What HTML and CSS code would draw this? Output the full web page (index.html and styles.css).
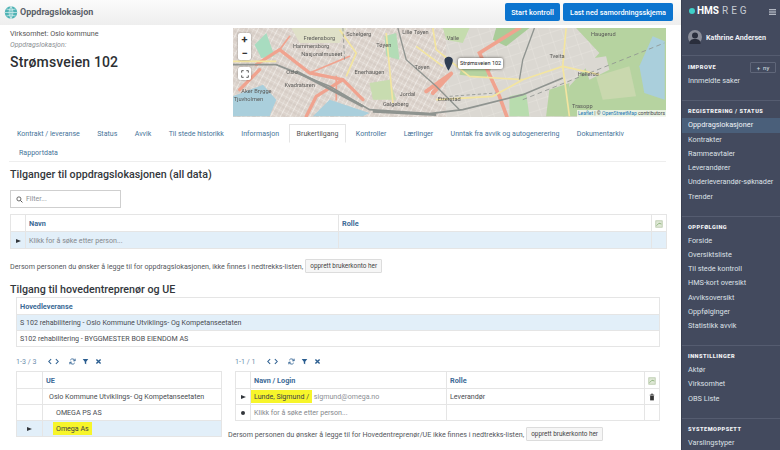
FILE: index.html
```html
<!DOCTYPE html>
<html lang="no">
<head>
<meta charset="utf-8">
<title>Oppdragslokasjon</title>
<link rel="stylesheet" href="styles.css">
</head>
<body>
<div class="app">
  <main class="main">
    <header class="topbar">
      <div class="brand">
        <svg class="globe" viewBox="0 0 18 18"><circle cx="9" cy="9" r="8" fill="#4fb3b5"/><path d="M9 1v16M1 9h16M3 4.500q6 2.500 12 0M3 13.500q6-2.500 12 0M9 1q-5 8 0 16M9 1q5 8 0 16" fill="none" stroke="#e8f5f5" stroke-width=".8"/></svg>
        <span class="brand-text">Oppdragslokasjon</span>
      </div>
      <div class="top-actions">
        <button class="btn-primary btn-start">Start kontroll</button>
        <button class="btn-primary btn-last">Last ned samordningsskjema</button>
      </div>
    </header>

    <section class="info">
      <div class="info-text">
        <div class="company">Virksomhet: Oslo kommune</div>
        <div class="sublabel">Oppdragslokasjon:</div>
        <h1 class="location">Strømsveien 102</h1>
      </div>
      <div class="map">
        <svg class="map-svg" viewBox="10 85 1300 267" preserveAspectRatio="none">
          <defs>
            <pattern id="streets" width="26" height="22" patternUnits="userSpaceOnUse" patternTransform="rotate(28)">
              <rect width="26" height="22" fill="#dcd3cc"/>
              <path d="M0 0H26M0 0V22M13 0V22" stroke="#f4f1ec" stroke-width="2"/>
              <path d="M0 11H26" stroke="#b9b3ad" stroke-width="1"/>
            </pattern>
            <pattern id="suburb" width="34" height="30" patternUnits="userSpaceOnUse" patternTransform="rotate(-18)">
              <rect width="34" height="30" fill="#dbd8d2"/>
              <path d="M0 0H34M0 0V30" stroke="#f1efea" stroke-width="1.500"/>
            </pattern>
          </defs>
          <rect x="10" y="85" width="1300" height="267" fill="url(#suburb)"/>
          <rect x="10" y="85" width="640" height="267" fill="url(#streets)"/>
          <path d="M1040 85L1310 85V350H1000L1020 260L1110 160Z" fill="#b6d3a0"/>
          <path d="M1100 230L1200 200L1220 290L1120 300Z" fill="#c9d8ae"/>
          <path d="M1060 180L1130 170L1140 210L1080 240Z" fill="#dbd8d2"/>
          <path d="M1230 200L1270 110L1306 125V300L1245 280Z" fill="#aacfdc"/>
          <path d="M10 290L100 255L140 300L120 350H10Z" fill="#aacfdc"/>
          <path d="M250 350L300 300L420 340L400 350Z" fill="#aacfdc"/>
          <path d="M75 135L110 100L135 170L95 175Z" fill="#a8dcc0"/>
          <path d="M800 85H900L830 140L790 120Z" fill="#a9cc98"/>
          <path d="M640 85H720L700 130L650 120Z" fill="#c5dcae"/>
          <path d="M465 110L500 100L510 180L470 170Z" fill="#b3dcb6"/>
          <path d="M700 190L790 200L770 235L690 225Z" fill="#b6d3a0"/>
          <path d="M840 290L890 280L900 350H840Z" fill="#b8dcae"/>
          <path d="M420 250L480 240L500 300L430 300Z" fill="#c8dcb0"/>
          <path d="M960 270L1020 250L1010 350H950Z" fill="#b6d3a0"/>
          <path d="M185 85H350L330 130L210 130Z" fill="#dfe0c8"/>
          <g fill="none" stroke="#f0a38f" stroke-linecap="round">
            <path d="M870 85L750 160L810 290L832 350" stroke-width="11"/>
            <path d="M665 222L610 280M665 222L590 275" stroke-width="12"/>
            <path d="M150 150L240 220L340 240L400 300M230 350L260 290L340 240M90 210L30 270M150 150L80 195" stroke-width="10"/>
            <path d="M150 150L180 110M240 220L360 170M320 230L320 300" stroke-width="5"/>
          </g>
          <g fill="none" stroke="#f3e5a0" stroke-width="5">
            <path d="M610 85L620 150L720 230L880 240L1000 200L1010 85M470 100L490 310M1000 200L1020 350M10 185L140 185M880 240L790 290L620 300"/>
            <path d="M330 90L380 160L350 230M560 140L640 200M1000 200L1110 225"/>
          </g>
          <g fill="none" stroke="#8f9490">
            <path d="M10 195L140 195L300 260L420 330L600 342L700 330L880 285L1000 235" stroke-width="5"/>
            <path d="M505 85L530 180L620 260L690 330" stroke-width="4"/>
            <path d="M915 85L880 180L870 240" stroke-width="4"/>
            <path d="M430 335L620 345M200 215L400 320" stroke-width="8"/>
            <path d="M880 300L1305 130" stroke-width="2.500" stroke-dasharray="14 10"/>
            <path d="M660 290L800 280M340 85L345 180" stroke-width="2.500" stroke-dasharray="10 7"/>
          </g>
          <g class="map-label">
            <text x="222" y="120">Fredensborg</text>
            <text x="190" y="145">Hammersborg</text>
            <text x="215" y="170">Nasjonalmuseet</text>
            <text x="350" y="110">Schelgerg</text>
            <text x="440" y="142">Tøyen</text>
            <text x="518" y="103">Lille Tøyen</text>
            <text x="652" y="122">Valle</text>
            <text x="375" y="222">Enerhaugen</text>
            <text x="170" y="222">Oslo</text>
            <text x="165" y="262">Kvadraturen</text>
            <text x="35" y="279">Aker Brygge</text>
            <text x="12" y="304">Tjuvholmen</text>
            <text x="510" y="290">Jordal</text>
            <text x="460" y="318">Galgeberg</text>
            <text x="625" y="303">Etterstad</text>
            <text x="555" y="208">Tøyen</text>
            <text x="960" y="175">Tveita</text>
            <text x="1045" y="228">Hellerud</text>
            <text x="1085" y="110">Haugerud</text>
            <text x="1028" y="326">Trasopp</text>
          </g>
          <path d="M657 213C648 197 645 190 645 180A13.500 13.500 0 0 1 670 180C670 190 666 197 657 213Z" fill="#2f3d52"/>
        </svg>
        <div class="map-zoom">
          <span class="map-zoom-btn">+</span>
          <span class="map-zoom-btn">−</span>
        </div>
        <div class="map-full">
          <svg viewBox="0 0 12 12"><path d="M1 4V1h3M8 1h3v3M11 8v3H8M4 11H1V8" fill="none" stroke="#444" stroke-width="1.300"/></svg>
        </div>
        <div class="map-tip">Strømsveien 102</div>
        <div class="map-attr"><span class="map-link">Leaflet</span> | © <span class="map-link">OpenStreetMap</span> contributors</div>
      </div>
    </section>

    <nav class="tabs">
      <a class="tab">Kontrakt / leveranse</a>
      <a class="tab">Status</a>
      <a class="tab">Avvik</a>
      <a class="tab">Til stede historikk</a>
      <a class="tab">Informasjon</a>
      <a class="tab tab-active">Brukertilgang</a>
      <a class="tab">Kontroller</a>
      <a class="tab">Lærlinger</a>
      <a class="tab">Unntak fra avvik og autogenerering</a>
      <a class="tab">Dokumentarkiv</a>
      <a class="tab tab-wide">Rapportdata</a>
    </nav>

    <h2 class="heading heading-first">Tilganger til oppdragslokasjonen (all data)</h2>

    <div class="filter">
      <svg class="filter-icon" viewBox="0 0 12 12"><circle cx="5" cy="5" r="3.500" fill="none" stroke="#555" stroke-width="1.500"/><path d="M7.500 7.500L11 11" stroke="#555" stroke-width="1.700"/></svg>
      <span class="filter-text">Filter...</span>
    </div>

    <table class="grid grid-one">
      <tr class="row-head">
        <th class="c-mark"></th><th class="c-half">Navn</th><th class="c-half">Rolle</th>
        <th class="c-act"><svg class="xls" viewBox="0 0 10 10"><rect x="1" y="1" width="8" height="8" fill="#dfe8d6" stroke="#b4c6a6"/><path d="M2 7L5 4L8 5" stroke="#7fa96d" fill="none"/></svg></th>
      </tr>
      <tr class="row-sel">
        <td class="c-mark"><span class="arrow"></span></td><td class="muted">Klikk for å søke etter person...</td><td></td><td class="c-act"></td>
      </tr>
    </table>

    <div class="note note-one">
      <span>Dersom personen du ønsker å legge til for oppdragslokasjonen, ikke finnes i nedtrekks-listen,</span>
      <button class="btn-small">opprett brukerkonto her</button>
    </div>

    <h2 class="heading heading-second">Tilgang til hovedentreprenør og UE</h2>

    <table class="grid grid-main">
      <tr class="row-head"><th>Hovedleveranse</th></tr>
      <tr class="row-sel"><td>S 102 rehabilitering - Oslo Kommune Utviklings- Og Kompetanseetaten</td></tr>
      <tr><td>S102 rehabilitering - BYGGMESTER BOB EIENDOM AS</td></tr>
    </table>

    <div class="split">
      <div class="pane">
        <div class="pager">
          <span class="pager-count">1-3 / 3</span>
          <span class="pager-icons">
            <svg class="ic ic-wide" viewBox="0 0 14 8"><path d="M4 1L1 4l3 3M10 1l3 3-3 3" fill="none" stroke="#2a5d8f" stroke-width="1.300"/></svg>
            <svg class="ic" viewBox="0 0 10 10"><path d="M8.500 4A3.700 3.700 0 0 0 1.800 3M1.500 6a3.700 3.700 0 0 0 6.700 1M8.800 1v3H6M1.200 9V6H4" fill="none" stroke="#2a5d8f" stroke-width="1.200"/></svg>
            <svg class="ic" viewBox="0 0 10 10"><path d="M1 1.500h8L6 5.500V9L4 8V5.500Z" fill="#2a5d8f"/></svg>
            <svg class="ic" viewBox="0 0 10 10"><path d="M2 2l6 6M8 2L2 8" stroke="#2a5d8f" stroke-width="2"/></svg>
          </span>
        </div>
        <table class="grid grid-ue">
          <tr class="row-head"><th class="c-ue-mark"></th><th>UE</th></tr>
          <tr><td class="c-ue-mark"></td><td class="ind-1">Oslo Kommune Utviklings- Og Kompetanseetaten</td></tr>
          <tr><td class="c-ue-mark"></td><td class="ind-2">OMEGA PS AS</td></tr>
          <tr class="row-sel"><td class="c-ue-mark"><span class="arrow"></span></td><td class="ind-2"><mark class="hl hl-ue">Omega As</mark></td></tr>
        </table>
      </div>
      <div class="pane">
        <div class="pager">
          <span class="pager-count">1-1 / 1</span>
          <span class="pager-icons">
            <svg class="ic ic-wide" viewBox="0 0 14 8"><path d="M4 1L1 4l3 3M10 1l3 3-3 3" fill="none" stroke="#2a5d8f" stroke-width="1.300"/></svg>
            <svg class="ic" viewBox="0 0 10 10"><path d="M8.500 4A3.700 3.700 0 0 0 1.800 3M1.500 6a3.700 3.700 0 0 0 6.700 1M8.800 1v3H6M1.200 9V6H4" fill="none" stroke="#2a5d8f" stroke-width="1.200"/></svg>
            <svg class="ic" viewBox="0 0 10 10"><path d="M1 1.500h8L6 5.500V9L4 8V5.500Z" fill="#2a5d8f"/></svg>
            <svg class="ic" viewBox="0 0 10 10"><path d="M2 2l6 6M8 2L2 8" stroke="#2a5d8f" stroke-width="2"/></svg>
          </span>
        </div>
        <table class="grid grid-users">
          <tr class="row-head">
            <th class="c-mark"></th><th class="c-login">Navn / Login</th><th class="c-role">Rolle</th>
            <th class="c-act"><svg class="xls" viewBox="0 0 10 10"><rect x="1" y="1" width="8" height="8" fill="#dfe8d6" stroke="#b4c6a6"/><path d="M2 7L5 4L8 5" stroke="#7fa96d" fill="none"/></svg></th>
          </tr>
          <tr>
            <td class="c-mark"><span class="arrow"></span></td>
            <td><mark class="hl">Lunde, Sigmund /</mark> <span class="login">sigmund@omega.no</span></td>
            <td>Leverandør</td>
            <td class="c-act"><svg class="trash" viewBox="0 0 8 10"><path d="M1 2.500h6M3 2.500V1h2v1.500" fill="none" stroke="#333"/><path d="M1.500 3.500h5V9.500h-5Z" fill="#333"/></svg></td>
          </tr>
          <tr>
            <td class="c-mark"><span class="dot"></span></td>
            <td class="muted">Klikk for å søke etter person...</td><td></td><td class="c-act"></td>
          </tr>
        </table>
        <div class="note note-two">
          <span>Dersom personen du ønsker å legge til for Hovedentreprenør/UE ikke finnes i nedtrekks-listen,</span>
          <button class="btn-small">opprett brukerkonto her</button>
        </div>
      </div>
    </div>
  </main>

  <aside class="sidebar">
    <div class="logo">
      <span class="logo-dot"></span><span class="logo-hms">HMS</span><span class="logo-reg">REG</span>
      <svg class="burger" viewBox="0 0 7 6"><path d="M0 .7h7M0 3h7M0 5.300h7" stroke="#d8dce4" stroke-width="1.100"/></svg>
    </div>
    <div class="user">
      <svg class="avatar" viewBox="0 0 14 14"><circle cx="7" cy="7" r="7" fill="#8a8d99"/><circle cx="7" cy="5.500" r="3" fill="#2a2e3c"/><path d="M1.500 14c0-4 2-5 5.500-5s5.500 1 5.500 5Z" fill="#2a2e3c"/></svg>
      <span class="user-name">Kathrine Andersen</span>
    </div>

    <div class="side-group side-improve">
      <div class="side-head-row">
        <span class="side-head">IMPROVE</span>
        <span class="side-add">+ &nbsp;ny</span>
      </div>
      <a class="side-item">Innmeldte saker</a>
    </div>
    <div class="side-group">
      <div class="side-head">REGISTRERING / STATUS</div>
      <a class="side-item side-active">Oppdragslokasjoner</a>
      <a class="side-item">Kontrakter</a>
      <a class="side-item">Rammeavtaler</a>
      <a class="side-item">Leverandører</a>
      <a class="side-item">Underleverandør-søknader</a>
      <a class="side-item">Trender</a>
    </div>
    <div class="side-group">
      <div class="side-head">OPPFØLGING</div>
      <a class="side-item">Forside</a>
      <a class="side-item">Oversiktsliste</a>
      <a class="side-item">Til stede kontroll</a>
      <a class="side-item">HMS-kort oversikt</a>
      <a class="side-item">Avviksoversikt</a>
      <a class="side-item">Oppfølginger</a>
      <a class="side-item">Statistikk avvik</a>
    </div>
    <div class="side-group">
      <div class="side-head">INNSTILLINGER</div>
      <a class="side-item">Aktør</a>
      <a class="side-item">Virksomhet</a>
      <a class="side-item">OBS Liste</a>
    </div>
    <div class="side-group">
      <div class="side-head">SYSTEMOPPSETT</div>
      <a class="side-item">Varslingstyper</a>
    </div>
  </aside>
</div>
</body>
</html>
```

FILE: styles.css
```css
* { box-sizing: border-box; }
html, body { margin: 0; padding: 0; height: 450px; overflow: hidden; }
body { font-family: Roboto, "Liberation Sans", sans-serif; color: #3b3f45; background: #fff; font-size: 8px; }
.app { display: flex; width: 780px; height: 450px; overflow: hidden; }
.main { width: 681px; flex: none; height: 450px; overflow: hidden; }

.topbar { height: 25px; display: flex; align-items: center; justify-content: space-between; padding: 0 8px 1px 4px; background: linear-gradient(#fbfbfb, #eeeeee); }
.brand { display: flex; align-items: center; gap: 2px; }
.globe { width: 14px; height: 15px; }
.brand-text { font-size: 9px; font-weight: 700; color: #5a6068; }
.top-actions { display: flex; gap: 3px; }
.btn-primary { height: 18px; padding: 0; border: 0; border-radius: 2px; background: #0b74cf; color: #fff; font: 500 7.300px Roboto, sans-serif; }
.btn-start { width: 55px; }
.btn-last { width: 110px; }

.info { display: flex; justify-content: space-between; padding: 3px 15px 0 10px; height: 92px; }
.company { font-size: 7.200px; color: #555; line-height: 10px; margin-top: 1px; }
.sublabel { font-size: 7px; font-style: italic; color: #8b8f94; line-height: 10px; margin-top: 1px; }
.location { margin: 3px 0 0; font-size: 14px; font-weight: 500; color: #2c2f33; line-height: 18px; letter-spacing: .15px; }
.map { position: relative; width: 433px; height: 89px; overflow: hidden; }
.map-svg { display: block; width: 433px; height: 89px; filter: blur(.35px); }
.map-label text { font: 17px Roboto, sans-serif; fill: #5a5a58; }
.map-zoom { position: absolute; left: 5px; top: 5px; width: 13px; height: 27px; background: #fff; border-radius: 2px; box-shadow: 0 0 2px rgba(0,0,0,.4); display: flex; flex-direction: column; }
.map-zoom-btn { height: 13.500px; text-align: center; font-size: 11px; line-height: 13px; font-weight: 700; color: #333; }
.map-full { position: absolute; left: 5px; top: 39px; width: 13px; height: 13px; background: #fff; border-radius: 2px; box-shadow: 0 0 2px rgba(0,0,0,.4); padding: 2.500px; }
.map-full svg { display: block; width: 8px; height: 8px; }
.map-tip { position: absolute; left: 225px; top: 30px; height: 11px; padding: 0 2px; background: #fff; border-radius: 2px; box-shadow: 0 0 3px rgba(0,0,0,.65); font-size: 5.500px; line-height: 11px; color: #222; white-space: nowrap; }
.map-attr { position: absolute; right: 0; bottom: 0; padding: 0 1px; background: rgba(255,255,255,.7); font-size: 5px; line-height: 7px; color: #444; white-space: nowrap; }
.map-link { color: #1f78b4; }

.tabs { margin: 7px 15px 0 9px; display: flex; flex-wrap: wrap; column-gap: 1.400px; border-bottom: 1px solid #eeeeee; height: 38px; align-content: flex-start; }
.tab { padding: 0 7px; height: 19px; line-height: 17px; font-size: 7.050px; color: #457399; white-space: nowrap; border: 1px solid transparent; }
.tab-active { color: #555; border-color: #e4e4e4; border-bottom-color: #fff; background: #fff; }
.tab-wide { padding: 0 9px; }

.heading { margin: 0; font-weight: 500; color: #33373c; font-size: 10.700px; line-height: 15px; letter-spacing: 0; }
.heading-first { margin: 5px 0 0 10px; }
.heading-second { margin: 9px 0 0 10px; }

.filter { margin: 8px 0 0 10px; width: 111px; height: 18px; border: 1px solid #cfcfcf; display: flex; align-items: center; padding-left: 5px; gap: 3px; }
.filter-icon { width: 7px; height: 7px; }
.filter-text { font-size: 7px; color: #8c8f94; }

.grid { border-collapse: collapse; table-layout: fixed; font-size: 7.100px; color: #4a4d52; }
.grid td, .grid th { border: 1px solid #e5e5e5; height: 16px; padding: 0 3px; white-space: nowrap; overflow: hidden; text-align: left; }
.grid th { color: #3c6a96; font-weight: 700; height: 17px; font-size: 7.300px; }
.row-sel td { background: #e2eff9; }
.grid-one { margin: 6px 0 0 10px; width: 656px; }
.c-mark { width: 15px; }
.grid td.c-mark, .grid th.c-mark { text-align: center; padding: 0; }
.c-half { width: 313px; }
.c-login { width: 196px; }
.c-role { width: 198px; }
.c-act { width: 15px; }
.grid td.c-act, .grid th.c-act { padding: 0; text-align: center; }
.grid-one td { height: 17px; }
.arrow { display: inline-block; width: 0; height: 0; border-left: 5px solid #33373c; border-top: 2.500px solid transparent; border-bottom: 2.500px solid transparent; }
.dot { display: inline-block; width: 4px; height: 4px; border-radius: 50%; background: #33373c; }
.muted { color: #85888d; }
.xls { width: 8px; height: 8px; display: inline-block; vertical-align: middle; }
.trash { width: 6px; height: 8px; display: inline-block; vertical-align: middle; }

.note { display: flex; align-items: center; gap: 2px; font-size: 7.170px; color: #55585d; white-space: nowrap; }
.note-one { margin: 10px 0 0 10px; }
.note-two { margin: 6px 0 0 -7px; }
.btn-small { height: 14px; width: 77px; padding: 0; border: 1px solid #dcdcdc; border-radius: 1px; background: #f6f6f6; font: 6.400px Roboto, sans-serif; color: #444; }

.grid-main { margin: 0 0 0 16px; width: 644px; }

.split { display: flex; gap: 13px; margin: 5px 0 0 16px; }
.pane { flex: none; }
.pager { height: 19px; display: flex; align-items: center; font-size: 7.100px; color: #6d8eac; }
.pager-count { width: 30px; }
.pager-icons { display: flex; align-items: center; gap: 6px; margin-left: 2px; }
.ic { width: 7px; height: 7px; }
.ic-wide { width: 11px; height: 7px; margin-right: 4px; }
.grid-ue { width: 206px; }
.c-ue-mark { width: 26px; }
.grid td.c-ue-mark, .grid th.c-ue-mark { text-align: center; padding: 0; }
.ind-1 { padding-left: 6px !important; }
.ind-2 { padding-left: 13px !important; }
.grid-users { width: 424px; }
.hl { background: #f7f52a; color: #3b3f45; padding: 2px 3px; margin-left: -3px; }
.login { color: #8d9095; }

.sidebar { width: 99px; flex: none; height: 450px; background: #434a5e; border-left: 1px solid #3a4052; color: #dfe2e8; overflow: hidden; }
.logo { height: 20px; display: flex; align-items: center; padding: 1px 4px 0 7px; }
.logo-dot { width: 6px; height: 6px; border-radius: 50%; background: #3fd0c9; margin-right: 2px; }
.logo-hms { font-size: 10px; font-weight: 700; color: #fff; }
.logo-reg { font-size: 10px; letter-spacing: 3px; color: #c6cad3; margin-left: 3px; }
.burger { width: 7px; height: 6px; margin: 3px 0 0 auto; }
.user { height: 36px; display: flex; align-items: center; padding: 0 0 1px 6px; gap: 4px; border-bottom: 1px solid #555c70; }
.avatar { width: 14px; height: 14px; flex: none; }
.user-name { font-size: 7.200px; font-weight: 700; color: #eef0f4; white-space: nowrap; }
.side-group { padding: 5px 0 11.500px; border-bottom: 1px solid #555c70; }
.side-group:last-child { border-bottom: 0; }
.side-group > .side-head { margin-bottom: 2px; }
.side-improve { padding: 4px 0 12px; }
.side-head-row { display: flex; align-items: center; justify-content: space-between; padding-right: 4px; height: 14px; }
.side-head { display: block; padding-left: 6px; font-size: 5.600px; font-weight: 900; letter-spacing: .5px; line-height: 10px; color: #f1f2f5; white-space: nowrap; }
.side-add { border: 1px solid #5f6679; border-radius: 1px; width: 26px; height: 11px; text-align: center; font-size: 6px; line-height: 9px; color: #dfe2e8; }
.side-item { display: block; padding-left: 6px; height: 14.300px; line-height: 14.300px; font-size: 7.300px; color: #dde0e6; white-space: nowrap; }
.side-active { background: #4a5f7a; color: #f0f3f7; }
```
